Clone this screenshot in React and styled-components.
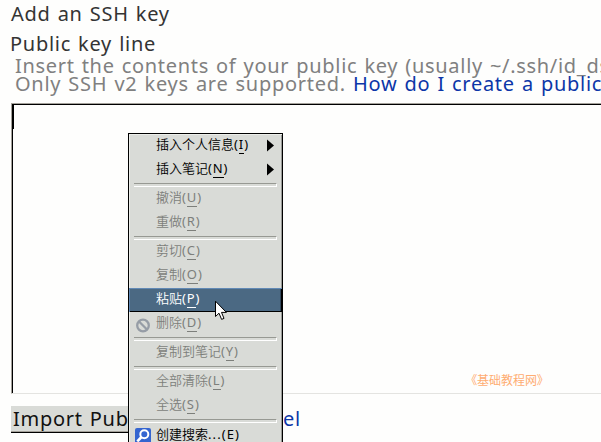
import React from "react";
import styled, { createGlobalStyle, css } from "styled-components";

const Global = createGlobalStyle`
  * { box-sizing: border-box; }
  body { margin: 0; background: #fefefd; overflow: hidden; }
`;

const Page = styled.main`
  width: 601px;
  height: 442px;
  position: relative;
  overflow: hidden;
  display: flex;
  flex-direction: column;
  background: #fefefd;
  color: #343434;
  font: 20px/30px "Noto Sans", sans-serif;
  letter-spacing: 0.72px;
  word-spacing: 1.2px;
  white-space: nowrap;
`;

const Heading = styled.h1`
  margin: 0;
  padding: 0 0 0 11px;
  height: 29px;
  font: inherit;
  line-height: 28px;
`;

const Label = styled.label`
  padding-left: 10px;
  height: 28px;
  line-height: 30px;
`;

const Help = styled.p`
  margin: 0;
  padding-left: 15px;
  height: 46px;
  line-height: 18px;
  color: #808080;
`;

const HelpLine = styled.span`
  display: block;
  letter-spacing: ${(p) => (p.$tight ? "0.69px" : "inherit")};
`;

const Link = styled.a`
  color: #0c36a8;
`;

const KeyField = styled.div`
  flex: 0 0 291px;
  margin-left: 11px;
  border-top: 1px solid #a4a19a;
  border-left: 1px solid #a4a19a;
  border-bottom: 1px solid #e4e4e1;
`;

const FieldInner = styled.div`
  height: 100%;
  border-top: 1px solid #000;
  border-left: 1px solid #000;
`;

const Caret = styled.div`
  width: 1px;
  height: 24px;
  background: #000;
`;

const Watermark = styled.span`
  display: block;
  margin: 242px 0 0 458px;
  color: #ffad72;
  font: 12px/18px "Noto Sans CJK SC", sans-serif;
  font-feature-settings: "palt";
  letter-spacing: 0;
`;

const Actions = styled.div`
  display: flex;
  margin: 12px 0 0 11px;
`;

const Submit = styled.button`
  width: 230px;
  height: 27px;
  padding: 0 0 0 2px;
  border: 0;
  border-bottom: 1px solid #000;
  box-shadow: inset 0 -1px #a4a19a;
  background: #d9dbd7;
  color: #111;
  font: 20px/24px "Noto Sans", sans-serif;
  letter-spacing: inherit;
  word-spacing: inherit;
  text-align: left;
`;

const Cancel = styled(Link)`
  width: 60px;
  line-height: 26px;
  display: flex;
  justify-content: flex-end;
`;

const Menu = styled.div`
  position: absolute;
  left: 128px;
  top: 133px;
  width: 155px;
  height: 316px;
  border: 1px solid #000;
  background: #d9dbd7;
  box-shadow: inset 1px 1px #eceeea, inset -1px 0 #999b97;
  font: 350 13px/24px "Noto Sans CJK SC", sans-serif;
  letter-spacing: 0;
  word-spacing: 0;
`;

const MenuItem = styled.div`
  height: 24px;
  display: flex;
  align-items: center;
  padding: 0 8px 0 5px;
  color: ${(p) => (p.$disabled ? "#7d7f7b" : "#000")};
  ${(p) =>
    p.$active &&
    css`
      color: #fff;
      background: #4b6983;
      box-shadow: inset 0 1px #6189b5, inset 1px 0 #6189b5, inset -1px -1px #000,
        inset -2px 0 #34495c;
    `}
`;

const IconSlot = styled.span`
  width: 22px;
  height: 24px;
  display: flex;
  align-items: center;
  padding: 2px 0 0 1px;
`;

const ItemText = styled.span`
  flex: 1;
  height: 24px;
  line-height: ${(p) => (p.$plain ? "22px" : "20px")};
`;

const Latin = styled.span`
  font-family: "Noto Sans", sans-serif;
  font-weight: 400;
  line-height: 1;
  letter-spacing: ${(p) => (p.$wide ? "1.1px" : "0.9px")};
`;

const Mnemonic = styled.span`
  ${(p) =>
    p.$line &&
    css`
      display: inline-block;
      line-height: 18px;
      border-bottom: 1px solid currentColor;
    `}
`;

const Separator = styled.div`
  height: 5px;
  padding: 1px 5px 0;
  &::before {
    content: "";
    display: block;
    height: 2px;
    border-top: 1px solid #979993;
    border-bottom: 1px solid #fff;
    border-right: 1px solid #fff;
  }
`;

const CursorLayer = styled.svg`
  position: absolute;
  left: 215px;
  top: 300px;
`;

const Arrow = () => (
  <svg width="7" height="14" viewBox="0 0 7 14">
    <path d="M0 .5 L7 6.5 L0 12.5Z" fill="#000" />
  </svg>
);

const BanIcon = () => (
  <svg width="15" height="15" viewBox="0 0 15 15" fill="none" stroke="#969da6" strokeWidth="2.3">
    <circle cx="8" cy="7.5" r="5.8" />
    <path d="M4 3.5 L12 11.5" />
  </svg>
);

const SearchIcon = () => (
  <svg width="16" height="16" viewBox="0 0 16 16" fill="none">
    <rect width="16" height="16" rx="2" fill="#3465d0" />
    <circle cx="9.3" cy="6.2" r="4" stroke="#fff" strokeWidth="2" />
    <path d="M6.5 9 L2.3 13.4" stroke="#fff" strokeWidth="2.6" />
  </svg>
);

const Cursor = () => (
  <CursorLayer width="14" height="22" viewBox="0 0 14 22">
    <path
      d="M.5 1.2 V16.5 L4 13.2 L6.6 19.4 L9 18.4 L6.5 12.4 H11.4 Z"
      fill="#fff"
      stroke="#000"
    />
  </CursorLayer>
);

const groups = [
  [
    { text: "插入个人信息", k: "I", sub: true },
    { text: "插入笔记", k: "N", sub: true },
  ],
  [
    { text: "撤消", k: "U", disabled: true },
    { text: "重做", k: "R", disabled: true },
  ],
  [
    { text: "剪切", k: "C", disabled: true },
    { text: "复制", k: "O", disabled: true },
    { text: "粘贴", k: "P", active: true },
    { text: "删除", k: "D", disabled: true, icon: <BanIcon /> },
  ],
  [{ text: "复制到笔记", k: "Y", disabled: true }],
  [
    { text: "全部清除", k: "L", disabled: true },
    { text: "全选", k: "S", disabled: true },
  ],
  [{ text: "创建搜索", dots: "...", k: "E", icon: <SearchIcon />, plain: true }],
];

export default function App() {
  return (
    <>
      <Global />
      <Page>
        <Heading>Add an SSH key</Heading>
        <Label>Public key line</Label>
        <Help>
          <HelpLine $tight>
            Insert the contents of your public key (usually ~/.ssh/id_dsa.pub)
          </HelpLine>
          <HelpLine>
            Only SSH v2 keys are supported. <Link>How do I create a public key?</Link>
          </HelpLine>
        </Help>
        <KeyField>
          <FieldInner>
            <Caret />
            <Watermark>《基础教程网》</Watermark>
          </FieldInner>
        </KeyField>
        <Actions>
          <Submit>Import Public Key</Submit>
          <Cancel>Cancel</Cancel>
        </Actions>
        <Menu>
          {groups.map((items, i) => (
            <React.Fragment key={i}>
              {i > 0 && <Separator />}
              {items.map((it) => (
                <MenuItem key={it.k} $disabled={it.disabled} $active={it.active}>
                  <IconSlot>{it.icon}</IconSlot>
                  <ItemText $plain={it.plain}>
                    {it.text}
                    <Latin $wide={!!it.dots}>
                      {it.dots}(<Mnemonic $line={!it.plain}>{it.k}</Mnemonic>)
                    </Latin>
                  </ItemText>
                  {it.sub && <Arrow />}
                </MenuItem>
              ))}
            </React.Fragment>
          ))}
        </Menu>
        <Cursor />
      </Page>
    </>
  );
}
